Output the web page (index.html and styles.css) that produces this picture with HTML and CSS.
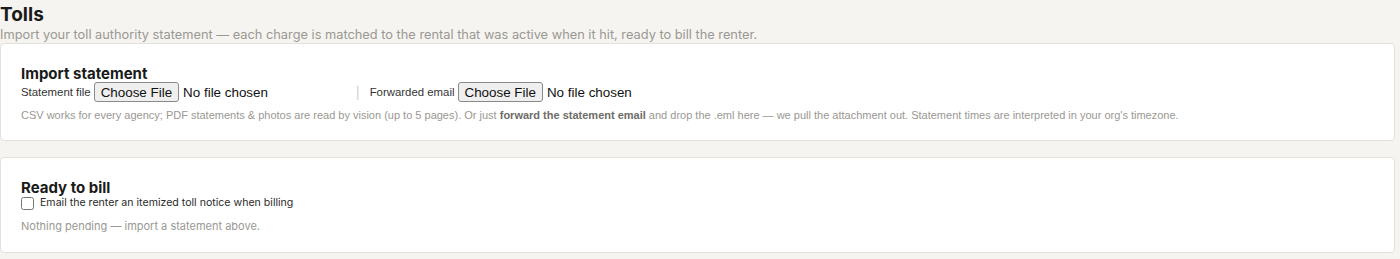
FILE: index.html
```html
<!DOCTYPE html>
<html lang="en">
<head>
    <meta charset="UTF-8">
    <meta name="viewport" content="width=device-width, initial-scale=1.0">
    <title>Tolls</title>
    <link rel="stylesheet" href="styles.css">
</head>
<body>
    <div class="page">
        <div class="page-head">
            <h1>Tolls</h1>
            <p class="subtitle">Import your toll authority statement — each charge is matched to the rental that was active when it hit, ready to bill the renter.</p>
        </div>

        <section class="card">
            <h2>Import statement</h2>
            <div class="upload-row">
                <label class="field">
                    <span class="field-label">Statement file</span>
                    <input type="file" accept=".csv,.pdf,image/*">
                </label>
                <span class="sep">|</span>
                <label class="field">
                    <span class="field-label">Forwarded email</span>
                    <input type="file" accept=".eml">
                </label>
            </div>
            <p class="hint">CSV works for every agency; PDF statements &amp; photos are read by vision (up to 5 pages). Or just <strong>forward the statement email</strong> and drop the .eml here — we pull the attachment out. Statement times are interpreted in your org's timezone.</p>
        </section>

        <section class="card">
            <h2>Ready to bill</h2>
            <label class="check">
                <input type="checkbox">
                <span>Email the renter an itemized toll notice when billing</span>
            </label>
            <p class="empty">Nothing pending — import a statement above.</p>
        </section>
    </div>
</body>
</html>
```

FILE: styles.css
```css
body {
    margin: 0;
    background-color: #f5f4f0;
    color: #1f1f1f;
    font-family: Inter, "Noto Sans", sans-serif;
}

.page {
    padding: 0 5px 0 0;
}

.page-head h1 {
    margin: 0;
    padding-top: 3px;
    font-size: 19px;
    line-height: 24px;
    font-weight: 700;
    color: #1a1a1a;
}

.subtitle {
    margin: 0;
    font-size: 12.8px;
    line-height: 16px;
    color: #9a9893;
}

.card {
    background-color: #fff;
    border: 1px solid #e3e1da;
    border-radius: 4px;
    padding: 21px 20px 18px;
    margin-bottom: 16px;
}

.card h2 {
    margin: 0;
    font-size: 15px;
    line-height: 17px;
    font-weight: 700;
    color: #1a1a1a;
}

.upload-row {
    display: flex;
    align-items: center;
    height: 20px;
}

.field {
    display: flex;
    align-items: center;
    gap: 3px;
}

.field-label {
    font-family: "Liberation Sans", Arial, sans-serif;
    font-size: 11.4px;
    color: #333;
}

input[type="file"] {
    width: 250px;
    font-family: "Liberation Sans", Arial, sans-serif;
    font-size: 13.4px;
    color: #111;
}

input[type="file"]::file-selector-button {
    font-family: "Liberation Sans", Arial, sans-serif;
    font-size: 13.4px;
    height: 20px;
    padding: 0 6px;
    margin-right: 4px;
    background-color: #efefef;
    border: 1px solid #8a8a8a;
    border-radius: 3px;
    color: #111;
}

.sep {
    margin: 0 10px 0 12px;
    color: #c8c6c0;
    font-size: 12px;
}

.hint {
    margin: 6px 0 0;
    font-family: "Liberation Sans", Arial, sans-serif;
    font-size: 11px;
    line-height: 14px;
    color: #9a9893;
}

.hint strong {
    color: #6e6c67;
}

.check {
    display: flex;
    align-items: center;
    gap: 6px;
    font-size: 10.6px;
    line-height: 14px;
    color: #2a2a2a;
}

.check input {
    margin: 0;
    width: 13px;
    height: 13px;
}

.empty {
    margin: 8px 0 0;
    font-size: 11px;
    line-height: 16px;
    color: #9a9893;
}
```
